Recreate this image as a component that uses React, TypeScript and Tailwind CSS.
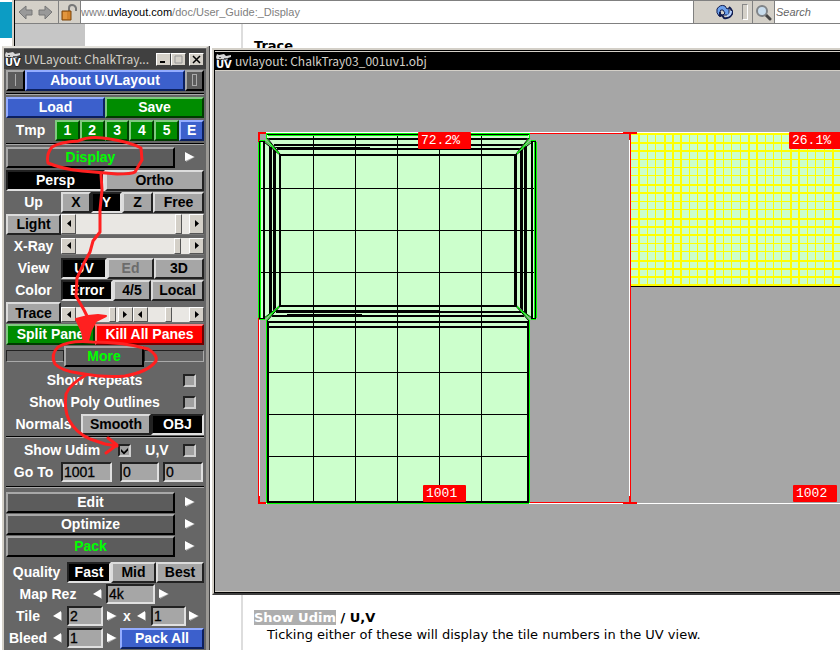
import type { ReactNode } from 'react'

const TONES = {
  light: 'bg-[#a6a6a6] text-black border-t-[#dcdcdc] border-l-[#dcdcdc] border-b-[#222] border-r-[#222]',
  on: 'bg-black text-white border-t-[#222] border-l-[#222] border-b-[#e0e0e0] border-r-[#e0e0e0]',
  dim: 'bg-[#a6a6a6] text-[#6c6c6c] border-t-[#dcdcdc] border-l-[#dcdcdc] border-b-[#222] border-r-[#222]',
  dark: 'bg-[#5c5c5c] text-white border-t-[#a8a8a8] border-l-[#a8a8a8] border-b-black border-r-black',
  open: 'bg-[#5c5c5c] text-[#00ff00] border-t-[#a8a8a8] border-l-[#a8a8a8] border-b-black border-r-black',
  blue: 'bg-[#3c60cc] text-white border-t-[#94acff] border-l-[#94acff] border-b-[#0c2060] border-r-[#0c2060]',
  green: 'bg-[#008c00] text-white border-t-[#80c880] border-l-[#80c880] border-b-[#003c00] border-r-[#003c00]',
  red: 'bg-[#ff0000] text-white border-t-[#ff8080] border-l-[#ff8080] border-b-[#700000] border-r-[#700000]',
}

function Btn({ tone = 'light', className = 'flex-1', children }: { tone?: keyof typeof TONES; className?: string; children?: ReactNode }) {
  return (
    <button type="button" className={`h-[21px] border-2 flex items-center justify-center whitespace-nowrap ${TONES[tone]} ${className}`}>
      {children}
    </button>
  )
}

function Row({ className = 'items-center', children }: { className?: string; children: ReactNode }) {
  return <div className={`flex h-[22px] ${className}`}>{children}</div>
}

function Label({ className = 'w-[55px]', htmlFor, children }: { className?: string; htmlFor?: string; children: ReactNode }) {
  return <label htmlFor={htmlFor} className={`text-center whitespace-nowrap ${className}`}>{children}</label>
}

function Sep({ className = 'h-[5px]' }: { className?: string }) {
  return (
    <div className={`flex flex-col justify-center ${className}`}>
      <div className="h-px bg-black" />
      <div className="h-px bg-[#a8a8a8]" />
    </div>
  )
}

// Small white triangle used next to sections and number fields
function Arrow({ left, label, className = '' }: { left?: boolean; label: string; className?: string }) {
  return (
    <button type="button" aria-label={label} className={className}>
      <svg width="10" height="10" viewBox="0 0 10 10">
        {left
          ? <><path d="M9 1v9L1 5z" fill="#aaa" /><path d="M8 0v9L0 5z" fill="#fff" /></>
          : <><path d="M1 1v9l9-5z" fill="#aaa" /><path d="M0 0v9l9-4z" fill="#fff" /></>}
      </svg>
    </button>
  )
}

function StepBtn({ left, label }: { left?: boolean; label: string }) {
  return (
    <button type="button" aria-label={label} className="w-[15px] shrink-0 border border-t-white border-l-white border-b-[#555] border-r-[#555] bg-[#d4d0c8] flex items-center justify-center">
      <svg width="4" height="7" viewBox="0 0 4 7"><path d={left ? 'M4 0v7L0 3.5z' : 'M0 0v7l4-3.5z'} /></svg>
    </button>
  )
}

function Slider({ label, value, className = 'h-[17px]' }: { label: string; value: number; className?: string }) {
  return (
    <div className={`flex flex-1 items-stretch min-w-0 bg-[#e9e7e3] border-b border-[#777] ${className}`}>
      <StepBtn left label={`${label} down`} />
      <input
        type="range"
        aria-label={label}
        defaultValue={value}
        className="min-w-0 flex-1 appearance-none bg-transparent [&::-webkit-slider-runnable-track]:h-full [&::-webkit-slider-thumb]:appearance-none [&::-webkit-slider-thumb]:h-full [&::-webkit-slider-thumb]:w-[7px] [&::-webkit-slider-thumb]:bg-[#d4d0c8] [&::-webkit-slider-thumb]:border [&::-webkit-slider-thumb]:border-t-white [&::-webkit-slider-thumb]:border-l-white [&::-webkit-slider-thumb]:border-b-[#555] [&::-webkit-slider-thumb]:border-r-[#555]"
      />
      <StepBtn label={`${label} up`} />
    </div>
  )
}

function Check({ id, checked }: { id: string; checked?: boolean }) {
  return (
    <span className="relative block size-[13px]">
      <input id={id} type="checkbox" defaultChecked={checked} className="block size-[13px] appearance-none border-2 border-t-[#222] border-l-[#222] border-b-[#d0d0d0] border-r-[#d0d0d0] bg-[#a0a0a0]" />
      {checked && (
        <svg className="absolute top-0 left-0 pointer-events-none" width="13" height="13" viewBox="0 0 13 13">
          <path d="M3 5l3 3 4-4v2.500l-4 4-3-3z" />
        </svg>
      )}
    </span>
  )
}

function Field({ id, label, value, className }: { id?: string; label?: string; value: string; className: string }) {
  return (
    <input id={id} aria-label={label} defaultValue={value} className={`h-5 border-2 border-t-[#222] border-l-[#222] border-b-[#e0e0e0] border-r-[#e0e0e0] bg-[#a6a6a6] px-px font-normal text-black [-webkit-text-stroke:0.3px_black] ${className}`} />
  )
}

function AppIcon() {
  return (
    <svg width="16" height="18" viewBox="0 0 16 18" className="shrink-0 overflow-visible">
      <path d="M1 2l2 1 5-1 2 2 5-1v2l-3 1-1 3H7L5 7 1 8 0 5z" fill="#d8d8d8" />
      <path d="M3 5.500h2M8 6.500h4M2 7.500h4" stroke="#555" />
      <text x="0" y="16" fill="#fff" stroke="#000" strokeWidth="1" paintOrder="stroke" fontSize="10" fontWeight="bold" fontFamily="DejaVu Sans, sans-serif">UV</text>
    </svg>
  )
}

function Browser() {
  return (
    <div className="flex h-full">
      <div className="w-3 shrink-0 pt-[2px]"><div className="h-9 bg-[#0c9cc4]" /></div>
      <div className="w-[3px] shrink-0 border-l-2 border-[#d4d0c8] border-r border-r-black" />
      <div className="flex min-w-0 flex-1 flex-col">
        <div className="flex h-6 shrink-0 items-stretch border-t border-b border-[#808080] bg-[#d4d0c8]">
          <button type="button" aria-label="Back" className="pl-[3px]">
            <svg width="15" height="15" viewBox="0 0 15 15"><path d="M1 7l7-6v4h6v5H8v4z" fill="#999" stroke="#777" /></svg>
          </button>
          <button type="button" aria-label="Forward" className="pl-[5px]">
            <svg width="15" height="15" viewBox="0 0 15 15"><path d="M14 7L7 1v4H1v5h6v4z" fill="#999" stroke="#777" /></svg>
          </button>
          <div className="ml-[5px] flex w-[23px] items-center justify-center border-x border-[#808080]">
            <svg width="17" height="17" viewBox="0 0 17 17">
              <path d="M8 8V4q0-3 3-3t4 3v3" fill="none" stroke="#777" strokeWidth="2" />
              <path d="M1 7h9v9H1z" fill="#d4842c" stroke="#7c4408" />
              <path d="M3 8v7M5 8v7" stroke="#f0a850" />
            </svg>
          </div>
          <a href="#guide" className="flex min-w-0 flex-1 items-center bg-white font-['Liberation_Sans',Arial,sans-serif] text-[11px] text-[#808080]">
            www.<span className="text-black">uvlayout.com</span>/doc/User_Guide:_Display
          </a>
          <button type="button" aria-label="Reload" className="flex w-[43px] items-center justify-end border-l border-[#808080] pr-[3px]">
            <svg width="17" height="16" viewBox="0 0 17 16" stroke="#101c50" strokeWidth="1" strokeLinejoin="round">
              <path d="M3 12Q0 9 1 5 4 0 9 2l2 3 2-1v7H7l2-2-2-3Q4 5 4 8z" fill="#6ca0ec" />
              <path d="M13 3q4 3 3 7-3 5-8 4l-2-3-2 1V8" fill="none" strokeWidth="2" />
              <path d="M11 12q4-1 4-5" fill="none" stroke="#b4d0ff" strokeWidth="2" />
            </svg>
          </button>
          <div className="flex w-3 items-center justify-end"><div className="h-4 w-[6px] border border-[#888] border-b-white border-r-white" /></div>
          <div className="ml-1 flex w-[23px] items-center justify-center border-x border-[#808080]">
            <svg width="17" height="17" viewBox="0 0 17 17">
              <path d="M10 10l5 5" stroke="#444" strokeWidth="3" strokeLinecap="round" />
              <circle cx="7" cy="7" r="5" fill="#c8dcec" stroke="#808488" strokeWidth="2" />
            </svg>
          </div>
          <input aria-label="Search" placeholder="Search" className="w-[65px] bg-white pl-px font-['Liberation_Sans',Arial,sans-serif] text-[11px] italic placeholder:text-[#666]" />
        </div>
        <div className="flex min-h-0 flex-1">
          <div className="w-[226px] shrink-0"><div className="h-6 w-[70px] bg-[#c6c6c6]" /></div>
          <main id="guide" className="flex flex-1 flex-col justify-between border-l-2 border-[#ddd] pl-[11px] font-['DejaVu_Sans',sans-serif] text-[13px] leading-4">
            <h2 className="pt-[14px] font-bold">Trace</h2>
            <section className="pb-[7px]">
              <h2 className="font-bold"><mark className="bg-[#aeaeae] text-white">Show Udim</mark> / U,V</h2>
              <p className="pl-[13px] pt-px">Ticking either of these will display the tile numbers in the UV view.</p>
            </section>
          </main>
        </div>
      </div>
    </div>
  )
}

const GRID_X = [313, 355, 397, 439, 481]
const GRID_Y = [188, 230, 272, 372, 414, 456]
const TILE_X = [638, 647, 655, 664, 672, 680, 689, 697, 706, 714, 723, 731, 740, 748, 756, 765, 773, 781, 790, 798, 807, 815, 824, 832]
const TILE_X_BOLD = [638, 664, 672, 680, 706, 714, 748, 756, 790, 798, 832]
const TILE_Y = [142, 150, 159, 167, 175, 184, 192, 201, 209, 218, 226, 234, 243, 251, 260, 268, 276]
const TILE_Y_BOLD = [142, 150, 184, 192, 218, 226, 234, 260, 268, 276]

function UvCanvas() {
  return (
    <svg className="block h-[520px] w-full bg-[#a6a6a6]" shapeRendering="crispEdges">
      <g transform="translate(-215 -71)">
        {/* udim tile borders */}
        <rect x="259" y="132" width="1200" height="1" fill="#fff" />
        <rect x="259" y="503" width="1200" height="1" fill="#fff" />
        <rect x="259" y="132" width="1" height="371" fill="#fff" />
        <rect x="258" y="318" width="1" height="185" fill="red" />
        <rect x="528" y="133" width="102" height="1" fill="red" />
        <rect x="528" y="502" width="102" height="1" fill="red" />
        <path d="M258 142V132h8v2h-6v8zM258 496h2v6h6v2h-8z" fill="red" />

        {/* lower face and top border face */}
        <path d="M267 134H529V139L516 154V307L529 321V503H267V321L280 307V154L267 139z" fill="#cfc" />
        <path d="M259 142h5l16 13v151l-16 12h-5z" fill="#cfc" />
        <path d="M536 142h-5l-15 13v151l15 12h5z" fill="#cfc" />
        {GRID_X.map(x => <rect key={x} x={x} y="134" width="1" height="368" />)}
        {GRID_Y.map(y => (
          y < 300
            ? <rect key={y} x="259" y={y} width="277" height="1" />
            : <rect key={y} x="268" y={y} width="260" height="1" />
        ))}
        <rect x="267" y="134" width="262" height="1" />
        <rect x="268" y="135" width="260" height="1" fill="#0f0" />
        <g stroke="#000" strokeWidth="2" fill="none">
          <path d="M268 139H528M274 145H523M277 149H520M280 155H516" />
          <path d="M280 306H516M276 312H521M272 316H524M268 322H528M268 327H528" />
          <path d="M268 321V502H528V321" />
          <path d="M264 142V318M280 155V306M532 142V318" />
          <path d="M515.500 155V306M521.500 150V311M525.500 146V315M270.500 147V314M274.500 150V310" strokeWidth="3" />
        </g>
        <path d="M275 147.500H370M275 310.500H439" stroke="#000" />
        <path d="M287 314.500H362" stroke="#000" />
        {/* seams between faces */}
        <g shapeRendering="auto">
          <path d="M265 141l3-3 11 14v2z M265 318l3 3 11-14v-2z M531 141l-3-3-11 14v2z M531 318l-3 3-11-14v-2z" fill="#a6a6a6" />
          <path d="M264 142l16 13M267 138l13 16M264 318l16-12M267 321l13-15M532 142l-16 13M529 138l-13 16M532 318l-16-12M529 321l-13-15" fill="none" stroke="#000" />
          <path d="M264 140l15 13M266 138l13 16M264 319l15-12M266 321l13-15M532 140l-15 13M530 138l-13 16M532 319l-15-12M530 321l-13-15" fill="none" stroke="#0f0" />
        </g>
        <g fill="#0f0">
          <rect x="258" y="142" width="1" height="176" />
          <rect x="260" y="142" width="1" height="176" />
          <rect x="534" y="142" width="1" height="176" />
          <rect x="536" y="142" width="1" height="176" />
          <rect x="259" y="140" width="6" height="1" />
          <rect x="259" y="319" width="6" height="1" />
          <rect x="531" y="140" width="5" height="1" />
          <rect x="531" y="319" width="5" height="1" />
          <rect x="266" y="133" width="264" height="1" />
          <rect x="266" y="133" width="1" height="6" />
          <rect x="529" y="133" width="1" height="6" />
          <rect x="266" y="321" width="1" height="182" />
          <rect x="529" y="321" width="1" height="182" />
          <rect x="267" y="503" width="262" height="1" />
        </g>
        <rect x="259" y="141" width="1" height="178" />
        <rect x="535" y="141" width="1" height="178" />
        <rect x="259" y="141" width="6" height="1" />
        <rect x="259" y="318" width="6" height="1" />
        <rect x="531" y="141" width="5" height="1" />
        <rect x="531" y="318" width="5" height="1" />

        {/* second tile */}
        <rect x="630" y="133" width="829" height="153" fill="#cfc" />
        <g fill="#ff0">
          {TILE_X.map(x => <rect key={x} x={x} y="133" width={TILE_X_BOLD.includes(x) ? 2 : 1} height="153" />)}
          {TILE_Y.map(y => <rect key={y} x="630" y={y} width="829" height={TILE_Y_BOLD.includes(y) ? 2 : 1} />)}
          <rect x="630" y="133" width="829" height="2" />
          <rect x="630" y="284" width="829" height="2" />
        </g>
        <rect x="630" y="286" width="829" height="1" />
        <rect x="629" y="134" width="1" height="369" fill="#fff" />
        <rect x="630" y="134" width="1" height="369" fill="red" />
        <path d="M623 132h14v2h-6v6h-2v-6h-6zM623 502h14v2h-14zM629 496h2v6h-2z" fill="red" />
      </g>
    </svg>
  )
}

function Tag({ className, children }: { className: string; children: ReactNode }) {
  return <span className={`absolute h-[17px] rounded-[1px] bg-[#ff0000] pl-[3px] font-['Liberation_Mono',monospace] text-[13px] leading-[18px] text-white ${className}`}>{children}</span>
}

function Viewport() {
  return (
    <section className="absolute top-12 left-[212px] right-0 overflow-hidden border-l-2 border-l-[#d4d0c8] border-t-2 border-t-[#d4d0c8] border-b-2 border-b-[#404040]">
      <div className="border-l border-t border-b border-black">
        <div className="flex h-5 items-center gap-[3px] border-t border-b border-[#d4d0c8] bg-black pl-px font-['Noto_Sans_CJK_JP',sans-serif] text-xs leading-4 text-[#d4d0c8]">
          <AppIcon />
          uvlayout: ChalkTray03_001uv1.obj
        </div>
        <div className="relative border-b border-[#d4d0c8]">
          <UvCanvas />
          <Tag className="top-[61px] left-[203px] w-[53px]">72.2%</Tag>
          <Tag className="top-[414px] left-[208px] w-[43px]">1001</Tag>
          <Tag className="top-[61px] left-[574px] w-[53px]">26.1%</Tag>
          <Tag className="top-[414px] left-[578px] w-[44px]">1002</Tag>
        </div>
      </div>
    </section>
  )
}

function Section({ name, open }: { name: string; open?: boolean }) {
  return (
    <Row>
      <Btn tone={open ? 'open' : 'dark'} className="flex-1">{name}</Btn>
      <Arrow label={`Expand ${name}`} className="w-[29px] pl-[10px]" />
    </Row>
  )
}

function WinBtn({ label, children }: { label: string; children: ReactNode }) {
  return (
    <button type="button" aria-label={label} className="flex h-[13px] w-[15px] items-center justify-center border border-t-white border-l-white border-b-[#404040] border-r-[#404040] bg-[#d4d0c8]">
      <svg width="9" height="9" viewBox="0 0 9 9" fill="none">{children}</svg>
    </button>
  )
}

function Panel() {
  return (
    <aside className="absolute top-[46px] bottom-0 left-[2px] w-[207px] overflow-hidden border-t-2 border-l-2 border-r-3 border-t-[#e4e2dc] border-l-[#d4d0c8] border-r-[#9a9894] bg-[#666] shadow-[1px_0_0_#404040]">
      <div className="mt-px flex h-5 items-center bg-[#404040] pl-px text-[#d4d0c8]">
        <AppIcon />
        <span className="flex-1 pl-[3px] font-['Noto_Sans_CJK_JP',sans-serif] text-xs leading-4 whitespace-nowrap">UVLayout: ChalkTray...</span>
        <WinBtn label="Minimize"><path d="M1 7h5" stroke="#000" strokeWidth="2" /></WinBtn>
        <WinBtn label="Maximize"><path d="M1 1h7v7H1z" stroke="#999" /></WinBtn>
        <div className="w-[3px]" />
        <WinBtn label="Close"><path d="M1 1l7 7M8 1L1 8" stroke="#000" strokeWidth="1.500" /></WinBtn>
        <div className="w-[2px]" />
      </div>
      <div className="px-[2px] font-['Liberation_Sans',Arial,sans-serif] text-sm leading-none font-bold text-white">
        <Row>
          <Btn tone="dark" className="w-[19px]"><span className="h-3 w-px bg-[#aaa]" /></Btn>
          <Btn tone="blue">About UVLayout</Btn>
          <Btn tone="dark" className="w-[19px]"><span className="h-3 w-[5px] border border-[#aaa]" /></Btn>
        </Row>
        <Sep />
        <Row>
          <Btn tone="blue">Load</Btn>
          <Btn tone="green">Save</Btn>
        </Row>
        <Row className="mt-px items-center">
          <Label className="w-[49px]">Tmp</Label>
          {['1', '2', '3', '4', '5'].map(n => <Btn key={n} tone="green">{n}</Btn>)}
          <Btn tone="blue">E</Btn>
        </Row>
        <Sep />
        <Section name="Display" open />
        <Row className="mt-px items-center">
          <Btn tone="on">Persp</Btn>
          <Btn>Ortho</Btn>
        </Row>
        <Row>
          <Label>Up</Label>
          <Btn className="w-[30px]">X</Btn>
          <Btn tone="on" className="w-[31px]">Y</Btn>
          <Btn className="w-[31px]">Z</Btn>
          <Btn>Free</Btn>
        </Row>
        <Row>
          <Btn className="w-[55px]">Light</Btn>
          <Slider label="Light" value={93} className="h-[21px]" />
        </Row>
        <Row>
          <Label>X-Ray</Label>
          <Slider label="X-Ray" value={92} />
        </Row>
        <Row>
          <Label>View</Label>
          <Btn tone="on" className="w-[46px]">UV</Btn>
          <Btn tone="dim" className="w-[47px]">Ed</Btn>
          <Btn>3D</Btn>
        </Row>
        <Row>
          <Label>Color</Label>
          <Btn tone="on" className="w-[52px]">Error</Btn>
          <Btn className="w-[38px]">4/5</Btn>
          <Btn>Local</Btn>
        </Row>
        <Row className="items-end">
          <Btn className="w-[55px]">Trace</Btn>
          <Slider label="Trace start" value={97} className="h-4" />
          <Slider label="Trace end" value={50} className="h-4" />
        </Row>
        <Row>
          <Btn tone="green" className="w-[89px]">Split Pane</Btn>
          <Btn tone="red">Kill All Panes</Btn>
        </Row>
        <Row>
          <div className="h-3 flex-1 border border-[#222] border-b-[#aaa]" />
          <Btn tone="open" className="w-[80px]">More</Btn>
          <div className="h-3 w-[60px] border border-[#222] border-b-[#aaa] border-r-[#aaa]" />
        </Row>
        <Row className="mt-[2px] items-center">
          <Label htmlFor="repeats" className="w-[177px]">Show Repeats</Label>
          <Check id="repeats" />
        </Row>
        <Row>
          <Label htmlFor="outlines" className="w-[177px]">Show Poly Outlines</Label>
          <Check id="outlines" />
        </Row>
        <Row>
          <Label className="w-[75px]">Normals</Label>
          <Btn className="w-[70px]">Smooth</Btn>
          <Btn tone="on">OBJ</Btn>
        </Row>
        <Sep className="h-1" />
        <Row>
          <Label htmlFor="udim" className="w-[112px]">Show Udim</Label>
          <Check id="udim" checked />
          <Label htmlFor="uv" className="w-[52px]">U,V</Label>
          <Check id="uv" />
        </Row>
        <Row>
          <Label htmlFor="goto">Go To</Label>
          <Field id="goto" value="1001" className="w-[51px]" />
          <Field label="Go to U" value="0" className="ml-2 w-[39px]" />
          <Field label="Go to V" value="0" className="ml-1 w-10" />
        </Row>
        <Sep className="h-2" />
        <Section name="Edit" />
        <Section name="Optimize" />
        <Section name="Pack" open />
        <Row className="mt-1 items-center">
          <Label className="w-[61px]">Quality</Label>
          <Btn tone="on" className="w-[44px]">Fast</Btn>
          <Btn className="w-[45px]">Mid</Btn>
          <Btn>Best</Btn>
        </Row>
        <Row>
          <Label htmlFor="rez" className="w-[84px]">Map Rez</Label>
          <Arrow left label="Smaller map" className="ml-[3px]" />
          <Field id="rez" value="4k" className="ml-[3px] w-[49px]" />
          <Arrow label="Larger map" className="ml-1" />
        </Row>
        <Row>
          <Label htmlFor="tile" className="w-[44px]">Tile</Label>
          <Arrow left label="Fewer columns" className="ml-[3px]" />
          <Field id="tile" value="2" className="ml-1 w-9" />
          <Arrow label="More columns" className="ml-1" />
          <span className="w-5 text-center">x</span>
          <Arrow left label="Fewer rows" />
          <Field label="Tile rows" value="1" className="ml-1 w-[35px]" />
          <Arrow label="More rows" className="ml-[3px]" />
        </Row>
        <Row>
          <Label htmlFor="bleed" className="w-[44px]">Bleed</Label>
          <Arrow left label="Less bleed" className="ml-[3px]" />
          <Field id="bleed" value="1" className="ml-1 w-9" />
          <Arrow label="More bleed" className="ml-1" />
          <Btn tone="blue" className="ml-[3px] flex-1">Pack All</Btn>
        </Row>
      </div>
    </aside>
  )
}

// Hand-drawn marker notes on top of the panel
function Markup() {
  return (
    <svg className="pointer-events-none absolute top-0 left-0" width="210" height="650" viewBox="0 0 210 650" fill="none" stroke="#ff2020" strokeWidth="3" strokeLinecap="round" strokeLinejoin="round">
      <path d="M78 141Q60 142 52 147Q46 154 48 163Q62 169 82 171L117 174Q132 174 135 172L142 160L141 148Q130 142 110 139Q90 135 78 141" />
      <path d="M101 174L102 190L100 210L100 232L93 241L90 252L84 263L77 278L76 296L84 310L88 318" />
      <path d="M76 319L88 316L98 315L106 316L96 321L91 330L88 341L84 342L82 332z" fill="#ff2020" strokeWidth="2" />
      <path d="M92 342Q70 340 58 347Q50 355 55 364Q62 371 78 373Q105 378 125 376Q148 372 156 361Q158 355 148 349Q125 342 92 342" />
      <path d="M86 375Q70 384 66 394Q64 410 69 420Q76 433 90 439L105 444L117 446M108 438L117 445L106 453" />
    </svg>
  )
}

export default function App() {
  return (
    <div className="relative h-screen overflow-hidden bg-white">
      <Browser />
      <Viewport />
      <Panel />
      <Markup />
    </div>
  )
}
